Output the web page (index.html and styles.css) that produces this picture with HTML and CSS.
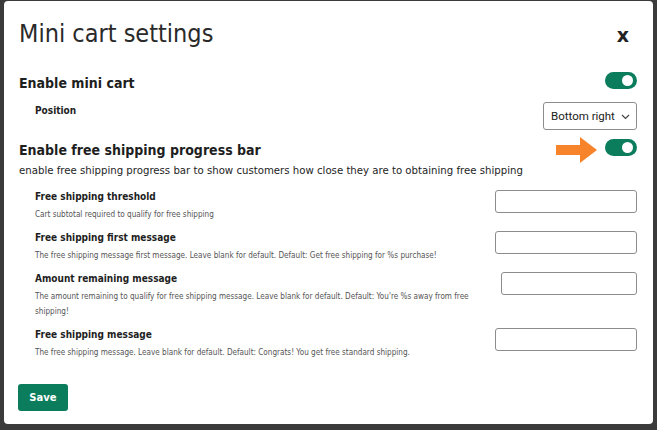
FILE: index.html
```html
<!DOCTYPE html>
<html lang="en">
<head>
    <meta charset="UTF-8">
    <meta name="viewport" content="width=device-width, initial-scale=1.0">
    <title>Mini cart settings</title>
    <link rel="stylesheet" href="styles.css">
</head>
<body>
    <div class="modal">
        <header class="modal-header">
            <h1>Mini cart settings</h1>
            <button class="close-btn">x</button>
        </header>

        <section class="setting">
            <div class="setting-head">
                <h2>Enable mini cart</h2>
                <span class="toggle on"></span>
            </div>
            <div class="field field-position">
                <label class="field-label">Position</label>
                <span class="select-wrap">
                    <select class="select">
                        <option>Bottom right</option>
                        <option>Bottom left</option>
                    </select>
                    <svg class="chevron" width="9" height="6" viewBox="0 0 9 6"><path d="M1 1l3.5 3.5L8 1" fill="none" stroke="#444" stroke-width="1.2"/></svg>
                </span>
            </div>
        </section>

        <section class="setting">
            <div class="setting-head">
                <h2>Enable free shipping progress bar</h2>
                <svg class="arrow" width="41" height="26" viewBox="0 0 41 26"><path d="M0 8h24V0l17 13-17 13v-8H0z" fill="#f7842a"/></svg>
                <span class="toggle on"></span>
            </div>
            <p class="setting-desc">enable free shipping progress bar to show customers how close they are to obtaining free shipping</p>

            <div class="field">
                <div class="field-text">
                    <label class="field-label">Free shipping threshold</label>
                    <p class="field-help">Cart subtotal required to qualify for free shipping</p>
                </div>
                <input class="input" type="text">
            </div>
            <div class="field">
                <div class="field-text">
                    <label class="field-label">Free shipping first message</label>
                    <p class="field-help">The free shipping message first message. Leave blank for default. Default: Get free shipping for %s purchase!</p>
                </div>
                <input class="input" type="text">
            </div>
            <div class="field">
                <div class="field-text">
                    <label class="field-label">Amount remaining message</label>
                    <p class="field-help">The amount remaining to qualify for free shipping message. Leave blank for default. Default: You're %s away from free shipping!</p>
                </div>
                <input class="input input-narrow" type="text">
            </div>
            <div class="field">
                <div class="field-text">
                    <label class="field-label">Free shipping message</label>
                    <p class="field-help">The free shipping message. Leave blank for default. Default: Congrats! You get free standard shipping.</p>
                </div>
                <input class="input" type="text">
            </div>
        </section>

        <button class="save-btn">Save</button>
    </div>
</body>
</html>
```

FILE: styles.css
```css
:root {
    --green: #0b7d5c;
    --text: #1e1e1e;
    --muted: #555555;
    --border: #8c8c8c;
}
body {
    margin: 0;
    padding: 1px 4px;
    background-color: #3b3b3b;
    font-family: 'DejaVu Sans Condensed', 'DejaVu Sans', sans-serif;
    color: var(--text);
}
.modal {
    box-sizing: border-box;
    width: 649px;
    height: 423px;
    background-color: #ffffff;
    border-radius: 4px;
    padding: 0 16px 0 15px;
}
.modal-header {
    display: flex;
    justify-content: space-between;
    align-items: flex-start;
    padding-top: 18px;
    height: 51px;
}
h1 {
    margin: 0;
    font-weight: normal;
    font-size: 25px;
    color: #2a2a2a;
}
.close-btn {
    border: none;
    background: none;
    padding: 0;
    margin: 5px 8px 0 0;
    font-family: 'DejaVu Sans', sans-serif;
    font-weight: bold;
    font-size: 19px;
    line-height: 22px;
    color: #222;
}
.setting + .setting {
    margin-top: 7px;
}
.setting-head {
    display: flex;
    align-items: flex-start;
}
h2 {
    margin: 5px auto 0 0;
    font-size: 14px;
    line-height: 17px;
    font-weight: bold;
}
.toggle {
    position: relative;
    width: 32px;
    height: 17px;
    margin-top: 2px;
    border-radius: 9px;
    background-color: var(--green);
}
.toggle::after {
    content: "";
    position: absolute;
    top: 3px;
    right: 4px;
    width: 11px;
    height: 11px;
    border-radius: 50%;
    background-color: #ffffff;
}
.arrow {
    margin: 0 8px -4px 0;
}
.setting-desc {
    margin: 5px 0 13px;
    font-size: 11.3px;
    line-height: 13px;
}
.field {
    display: flex;
    justify-content: space-between;
    align-items: flex-start;
    gap: 28px;
    padding-left: 16px;
    margin-bottom: 9px;
}
.field-position {
    margin: 10px 0 0;
}
.field-position .field-label {
    margin-top: 2px;
}
.field-text {
    flex: 1 1 auto;
}
.field-label {
    display: block;
    font-size: 10px;
    font-weight: bold;
    line-height: 14px;
}
.field-help {
    margin: 3px 0 0;
    font-size: 8.1px;
    line-height: 15px;
    color: var(--muted);
}
.select-wrap {
    position: relative;
    display: block;
    width: 94px;
    height: 28px;
}
.select {
    appearance: none;
    box-sizing: border-box;
    width: 94px;
    height: 28px;
    padding: 0 0 0 7px;
    border: 1px solid var(--border);
    border-radius: 3px;
    background-color: #ffffff;
    font-family: Roboto, sans-serif;
    font-size: 11.5px;
    color: #222;
}
.chevron {
    position: absolute;
    top: 12px;
    right: 7px;
    pointer-events: none;
}
.input {
    flex: 0 0 auto;
    box-sizing: border-box;
    width: 142px;
    height: 23px;
    margin-top: 0;
    border: 1px solid var(--border);
    border-radius: 3px;
}
.input-narrow {
    width: 136px;
}
.save-btn {
    display: block;
    margin-top: 24px;
    margin-left: -1px;
    width: 50px;
    height: 27px;
    border: none;
    border-radius: 3px;
    background-color: var(--green);
    color: #ffffff;
    font-family: 'DejaVu Sans', sans-serif;
    font-weight: bold;
    font-size: 10px;
}
```
